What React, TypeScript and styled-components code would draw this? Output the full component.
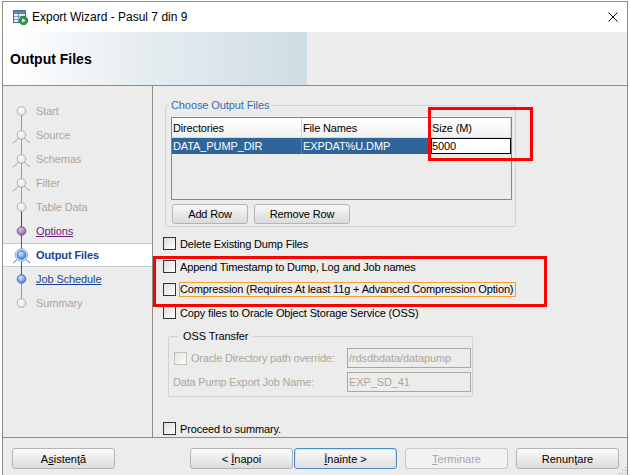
import React from "react";
import styled, { createGlobalStyle, css } from "styled-components";

const FONT = `"Liberation Sans", Arial, sans-serif`;

const GlobalStyle = createGlobalStyle`
  html, body { margin: 0; padding: 0; background: #ffffff; }
  body { font-family: ${FONT}; font-size: 11px; color: #000; }
  *, *::before, *::after { box-sizing: border-box; }
`;

const Frame = styled.div`
  position: relative;
  margin: 1px 0 0 2px;
  width: 626px;
  height: 474px;
  border: 1px solid #8c8c8c;
  border-bottom: none;
  background: #ececec;
  display: flex;
  flex-direction: column;
  overflow: hidden;
`;

const TitleBar = styled.div`
  height: 30px;
  flex: none;
  display: flex;
  align-items: center;
  gap: 4px;
  padding: 0 9px;
  background: #ffffff;
`;

const TitleText = styled.span`
  flex: 1;
  font-size: 12px;
  color: #000;
`;

const CloseGlyph = styled.svg`
  display: block;
`;

const Header = styled.div`
  height: 54px;
  flex: none;
  display: flex;
  align-items: center;
  padding-left: 7px;
  border-bottom: 1px solid #8c8c8c;
  background: linear-gradient(to right, #ffffff 0%, #e6edf1 45%, #cfdde4 100%) 0 0 / 304px 100% no-repeat,
    #ececec;
`;

const HeaderTitle = styled.h1`
  margin: 0;
  font-size: 14px;
  font-weight: bold;
  color: #000;
`;

const Body = styled.div`
  height: 352px;
  flex: none;
  display: flex;
  border-bottom: 1px solid #8c8c8c;
`;

const Nav = styled.nav`
  width: 150px;
  flex: none;
  border-right: 1px solid #8c8c8c;
  padding-top: 13px;
  display: flex;
  flex-direction: column;
`;

const NavRow = styled.div<{ $selected?: boolean }>`
  height: 24px;
  display: flex;
  align-items: center;
  ${(p) =>
    p.$selected &&
    css`
      background: #ffffff;
      box-shadow: inset 0 1px #c3cbd6, inset 0 -1px #c3cbd6;
    `}
`;

type StepState = "disabled" | "visited" | "current" | "next";

const NavLabel = styled.span<{ $state: StepState }>`
  font-size: 11px;
  letter-spacing: -0.1px;
  color: ${(p) =>
    p.$state === "disabled" ? "#aca899" : p.$state === "visited" ? "#6a1f86" : "#1c3f94"};
  font-weight: ${(p) => (p.$state === "current" ? "bold" : "normal")};
  text-decoration: ${(p) => (p.$state === "visited" || p.$state === "next" ? "underline" : "none")};
`;

const Main = styled.main`
  position: relative;
  flex: 1;
  display: flex;
  flex-direction: column;
  align-items: flex-start;
  padding-left: 10px;
`;

const GroupBox = styled.div<{ $top: number; $indent: number; $width: number; $height: number }>`
  position: relative;
  flex: none;
  margin: ${(p) => p.$top}px 0 0 ${(p) => p.$indent}px;
  width: ${(p) => p.$width}px;
  height: ${(p) => p.$height}px;
  border: 1px solid #d2d2d2;
  border-radius: 2px;
`;

const GroupLegend = styled.span<{ $tone: "blue" | "dark"; $left: number; $padX: number }>`
  position: absolute;
  top: -8px;
  left: ${(p) => p.$left}px;
  padding: 0 ${(p) => p.$padX}px;
  line-height: 14px;
  font-size: 11px;
  letter-spacing: -0.1px;
  background: #ececec;
  color: ${(p) => (p.$tone === "blue" ? "#3469b6" : "#000")};
`;

const FilesContent = styled.div`
  display: flex;
  flex-direction: column;
  gap: 4px;
  padding: 11px 3px 0 5px;
`;

const FileTable = styled.div`
  width: 341px;
  height: 83px;
  border: 1px solid #828790;
  display: grid;
  grid-template-columns: 130px 129px 80px;
  grid-template-rows: 20px 16px;
  align-content: start;
`;

const HeadCell = styled.div`
  display: flex;
  align-items: center;
  padding-left: 1px;
  background: linear-gradient(#ffffff, #f1f1f1);
  border-right: 1px solid #d5d5d5;
  border-bottom: 1px solid #dcdcdc;
  font-size: 11px;
  letter-spacing: -0.15px;
  &:last-child {
    border-right: none;
  }
`;

const RowCell = styled.div<{ $editing?: boolean }>`
  display: flex;
  align-items: center;
  padding-left: 1px;
  font-size: 11px;
  letter-spacing: -0.1px;
  white-space: nowrap;
  ${(p) =>
    p.$editing
      ? css`
          background: #ffffff;
          color: #000;
          border: 1px solid #000;
          padding-left: 0;
        `
      : css`
          background: #30659a;
          color: #ffffff;
          border-right: 1px solid #5a84ad;
        `}
`;

const ButtonRow = styled.div`
  display: flex;
  gap: 6px;
  padding-left: 1px;
`;

const PushButton = styled.button<{ $width: number }>`
  width: ${(p) => p.$width}px;
  height: 20px;
  padding: 0;
  font-family: ${FONT};
  font-size: 11px;
  letter-spacing: -0.15px;
  color: #000;
  border: 1px solid #b4b4b4;
  border-radius: 3px;
  background: linear-gradient(#fafafa, #e6e6e6 55%, #dcdcdc);
`;

const CheckList = styled.div`
  display: flex;
  flex-direction: column;
  margin-top: 5px;
`;

const CheckRow = styled.label`
  height: 23px;
  display: flex;
  align-items: center;
  gap: 4px;
  font-size: 11px;
  letter-spacing: -0.15px;
  white-space: nowrap;
`;

const CheckBox = styled.span<{ $disabled?: boolean }>`
  flex: none;
  width: 13px;
  height: 13px;
  border: 1px solid ${(p) => (p.$disabled ? "#c4c1b4" : "#333333")};
  background: ${(p) =>
    p.$disabled ? "linear-gradient(135deg, #e6e6e6, #fbfbfb)" : "linear-gradient(135deg, #dcdcdc, #ffffff)"};
`;

const FocusLabel = styled.span`
  margin-left: -1px;
  padding: 0 2px 0 0;
  line-height: 13px;
  border: 1px solid #f2a32e;
`;

const OssGrid = styled.div`
  display: grid;
  grid-template-columns: 173px 124px;
  grid-template-rows: 20px 20px;
  row-gap: 4px;
  align-items: center;
  padding: 11px 0 0 5px;
`;

const OssLabel = styled.span<{ $shift?: number }>`
  display: flex;
  align-items: center;
  gap: 4px;
  margin-left: ${(p) => p.$shift ?? 0}px;
  font-size: 11px;
  letter-spacing: -0.2px;
  color: #aca899;
  white-space: nowrap;
`;

const OssInput = styled.div`
  height: 20px;
  display: flex;
  align-items: center;
  padding-left: 1px;
  border: 1px solid #aaa898;
  background: #ececec;
  color: #aca899;
  font-size: 11px;
  letter-spacing: -0.1px;
`;

const ProceedList = styled(CheckList)`
  margin-top: 20px;
`;

const RedBox = styled.div<{ $left: number; $top: number; $width: number; $height: number }>`
  position: absolute;
  left: ${(p) => p.$left}px;
  top: ${(p) => p.$top}px;
  width: ${(p) => p.$width}px;
  height: ${(p) => p.$height}px;
  border: 3px solid #ff0000;
  pointer-events: none;
`;

const Footer = styled.footer`
  position: relative;
  flex: 1;
  display: flex;
  align-items: flex-start;
  padding: 10px 8px 0 9px;
`;

const FooterNav = styled.div`
  margin-left: auto;
  display: flex;
`;

type BtnVariant = "normal" | "default" | "disabled";

const FooterButton = styled.button<{ $variant?: BtnVariant; $gap?: number }>`
  width: 103px;
  height: 21px;
  padding: 0;
  margin-left: ${(p) => p.$gap ?? 0}px;
  font-family: ${FONT};
  font-size: 11px;
  border-radius: 3px;
  ${(p) =>
    p.$variant === "disabled"
      ? css`
          color: #a6a6a6;
          border: 1px solid #c6c6c6;
          background: #f2f2f2;
        `
      : p.$variant === "default"
      ? css`
          color: #000;
          border: 1px solid #4a8ccc;
          background: linear-gradient(#fbfbfb, #eaeaea 55%, #dfdfdf);
          box-shadow: inset 0 0 0 1px #cfe3f5;
        `
      : css`
          color: #000;
          border: 1px solid #b4b4b4;
          background: linear-gradient(#fbfbfb, #eaeaea 55%, #dcdcdc);
        `}
  u {
    text-decoration: underline;
    text-underline-offset: 1px;
  }
`;

const Grip = styled.svg`
  position: absolute;
  right: 0;
  bottom: 0;
  display: block;
`;

const Mnemonic = styled.u``;

/* ---------- icons ---------- */

function WizardIcon() {
  return (
    <svg width="16" height="16" viewBox="0 0 16 16">
      <rect x="1.5" y="1.5" width="12" height="12" fill="#e4ecf6" stroke="#48709f" />
      <rect x="2" y="2" width="11" height="3" fill="#5b86bf" />
      <line x1="2" y1="7.5" x2="13" y2="7.5" stroke="#7d9cc4" />
      <line x1="2" y1="10.5" x2="13" y2="10.5" stroke="#7d9cc4" />
      <line x1="6.5" y1="5" x2="6.5" y2="13" stroke="#7d9cc4" />
      <circle cx="11.5" cy="11.5" r="4.2" fill="#2f9c3a" stroke="#1d6f27" strokeWidth="0.8" />
      <path d="M10.2 9.4 L13.6 11.5 L10.2 13.6 Z" fill="#ffffff" />
    </svg>
  );
}

function CloseIcon() {
  return (
    <CloseGlyph width="10" height="10" viewBox="0 0 10 10">
      <path d="M0.5 0.5 L9.5 9.5 M9.5 0.5 L0.5 9.5" stroke="#000" strokeWidth="1" />
    </CloseGlyph>
  );
}

type Step = {
  label: string;
  state: StepState;
  top?: string;
  bottom?: string;
  legs?: boolean;
};

const GRAY = "#9a9a9a";
const PURPLE = "#6c2d8a";
const BLUE = "#2f5db4";

const steps: Step[] = [
  { label: "Start", state: "disabled", bottom: GRAY },
  { label: "Source", state: "disabled", top: GRAY, bottom: GRAY, legs: true },
  { label: "Schemas", state: "disabled", top: GRAY, bottom: GRAY, legs: true },
  { label: "Filter", state: "disabled", top: GRAY, bottom: GRAY, legs: true },
  { label: "Table Data", state: "disabled", top: GRAY, bottom: PURPLE },
  { label: "Options", state: "visited", top: PURPLE, bottom: BLUE },
  { label: "Output Files", state: "current", top: BLUE, bottom: BLUE, legs: true },
  { label: "Job Schedule", state: "next", top: BLUE, bottom: GRAY },
  { label: "Summary", state: "disabled", top: GRAY },
];

function StepIcon({ step, id }: { step: Step; id: number }) {
  const cx = 18.5;
  const cy = 12;
  const legColor = step.state === "current" ? "#3c6fc4" : "#a3a3a3";
  return (
    <svg width="33" height="24" viewBox="0 0 33 24" style={{ flex: "none" }}>
      <defs>
        <radialGradient id={`g${id}`} cx="0.4" cy="0.35" r="0.7">
          {step.state === "disabled" && (
            <>
              <stop offset="0" stopColor="#ffffff" />
              <stop offset="1" stopColor="#e2e2e2" />
            </>
          )}
          {step.state === "visited" && (
            <>
              <stop offset="0" stopColor="#d9c2e4" />
              <stop offset="1" stopColor="#8a5aa3" />
            </>
          )}
          {(step.state === "current" || step.state === "next") && (
            <>
              <stop offset="0" stopColor="#d6e6fa" />
              <stop offset="1" stopColor="#3f77c8" />
            </>
          )}
        </radialGradient>
      </defs>
      {step.top && <line x1={cx} y1="0" x2={cx} y2={cy} stroke={step.top} />}
      {step.bottom && <line x1={cx} y1={cy} x2={cx} y2="24" stroke={step.bottom} />}
      {step.legs && (
        <>
          <line x1={cx} y1={cy + 1} x2={cx - 8.5} y2={cy + 8} stroke={legColor} />
          <line x1={cx} y1={cy + 1} x2={cx + 8.5} y2={cy + 8} stroke={legColor} />
        </>
      )}
      {step.state === "current" ? (
        <>
          <circle cx={cx} cy={cy} r="6.3" fill="#cfe0f6" stroke="#8fb3e3" />
          <circle cx={cx} cy={cy} r="4.3" fill={`url(#g${id})`} stroke="#3567b8" strokeWidth="0.8" />
        </>
      ) : (
        <circle
          cx={cx}
          cy={cy}
          r="4.3"
          fill={`url(#g${id})`}
          stroke={step.state === "disabled" ? "#a9a9a9" : step.state === "visited" ? "#7a4a94" : "#3a6cc0"}
          strokeWidth="0.9"
        />
      )}
    </svg>
  );
}

function GripIcon() {
  const dots: [number, number][] = [
    [8, 2],
    [8, 5],
    [5, 5],
    [8, 8],
    [5, 8],
    [2, 8],
  ];
  return (
    <Grip width="10" height="10" viewBox="0 0 10 10">
      {dots.map(([x, y], i) => (
        <rect key={i} x={x} y={y} width="1" height="1" fill="#9a9a9a" />
      ))}
    </Grip>
  );
}

export default function App() {
  return (
    <>
      <GlobalStyle />
      <Frame>
        <TitleBar>
          <WizardIcon />
          <TitleText>Export Wizard - Pasul 7 din 9</TitleText>
          <CloseIcon />
        </TitleBar>
        <Header>
          <HeaderTitle>Output Files</HeaderTitle>
        </Header>
        <Body>
          <Nav>
            {steps.map((s, i) => (
              <NavRow key={s.label} $selected={s.state === "current"}>
                <StepIcon step={s} id={i} />
                <NavLabel $state={s.state}>{s.label}</NavLabel>
              </NavRow>
            ))}
          </Nav>
          <Main>
            <GroupBox $top={19} $indent={2} $width={351} $height={122}>
              <GroupLegend $tone="blue" $left={3} $padX={2}>
                Choose Output Files
              </GroupLegend>
              <FilesContent>
                <FileTable>
                  <HeadCell>Directories</HeadCell>
                  <HeadCell>File Names</HeadCell>
                  <HeadCell>Size (M)</HeadCell>
                  <RowCell>DATA_PUMP_DIR</RowCell>
                  <RowCell>EXPDAT%U.DMP</RowCell>
                  <RowCell $editing>5000</RowCell>
                </FileTable>
                <ButtonRow>
                  <PushButton $width={76}>Add Row</PushButton>
                  <PushButton $width={96}>Remove Row</PushButton>
                </ButtonRow>
              </FilesContent>
            </GroupBox>

            <CheckList>
              <CheckRow>
                <CheckBox />
                Delete Existing Dump Files
              </CheckRow>
              <CheckRow>
                <CheckBox />
                Append Timestamp to Dump, Log and Job names
              </CheckRow>
              <CheckRow>
                <CheckBox />
                <FocusLabel>Compression (Requires At least 11g + Advanced Compression Option)</FocusLabel>
              </CheckRow>
              <CheckRow>
                <CheckBox />
                Copy files to Oracle Object Storage Service (OSS)
              </CheckRow>
            </CheckList>

            <GroupBox $top={12} $indent={5} $width={305} $height={61}>
              <GroupLegend $tone="dark" $left={9} $padX={5}>
                OSS Transfer
              </GroupLegend>
              <OssGrid>
                <OssLabel>
                  <CheckBox $disabled />
                  Oracle Directory path override:
                </OssLabel>
                <OssInput>/rdsdbdata/datapump</OssInput>
                <OssLabel $shift={-1}>Data Pump Export Job Name:</OssLabel>
                <OssInput>EXP_SD_41</OssInput>
              </OssGrid>
            </GroupBox>

            <ProceedList>
              <CheckRow>
                <CheckBox />
                Proceed to summary.
              </CheckRow>
            </ProceedList>

            <RedBox $left={275} $top={21} $width={105} $height={54} />
            <RedBox $left={0} $top={170} $width={394} $height={51} />
          </Main>
        </Body>
        <Footer>
          <FooterButton>
            A<Mnemonic>s</Mnemonic>istenţă
          </FooterButton>
          <FooterNav>
            <FooterButton>
              &lt; <Mnemonic>Î</Mnemonic>napoi
            </FooterButton>
            <FooterButton $variant="default" $gap={1}>
              <Mnemonic>Î</Mnemonic>nainte &gt;
            </FooterButton>
            <FooterButton $variant="disabled" $gap={8}>
              <Mnemonic>T</Mnemonic>erminare
            </FooterButton>
            <FooterButton $gap={8}>Renunţare</FooterButton>
          </FooterNav>
          <GripIcon />
        </Footer>
      </Frame>
    </>
  );
}
